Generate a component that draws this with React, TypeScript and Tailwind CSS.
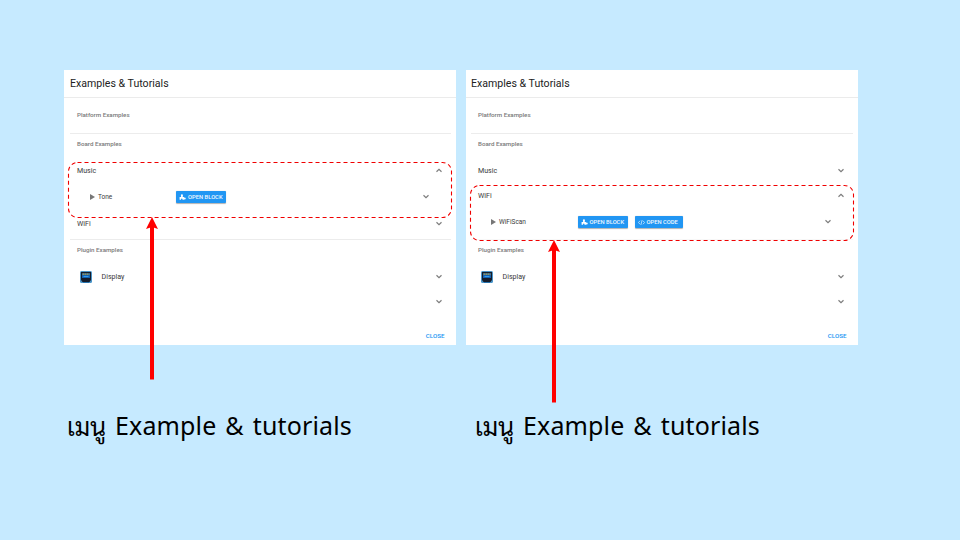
import React from "react";

type Kind = "music" | "wifi";

function Chevron({ up = false }: { up?: boolean }) {
  return (
    <svg className="h-2 w-2 shrink-0" viewBox="0 0 8 8" fill="none" stroke="#7c7c7c" strokeWidth="1.2">
      {up ? <path d="M1.500 4.700 4 2.400 6.500 4.700" /> : <path d="M1.500 2.300 4 4.600 6.500 2.300" />}
    </svg>
  );
}

function PuzzleIcon() {
  return (
    <svg className="h-[7px] w-[7px] shrink-0" viewBox="0 0 24 24" fill="#fff">
      <path d="M2 10h5V6.500a3.500 3.500 0 1 1 6 0V10h4v3a3.500 3.500 0 1 1 0 5v2h-5v-2a2.500 2.500 0 0 0-5 0v2H2z" />
    </svg>
  );
}

function CodeIcon() {
  return (
    <svg className="h-[7px] w-[7px] shrink-0" viewBox="0 0 24 24" fill="none" stroke="#fff" strokeWidth="2.2">
      <path d="M7 6 1.500 12 7 18M17 6l5.500 6L17 18M14 4l-4 16" />
    </svg>
  );
}

function DisplayModule() {
  return (
    <svg className="h-3 w-3 shrink-0" viewBox="0 0 12 12">
      <rect width="12" height="12" rx="1.500" fill="#4a94c8" />
      <path d="M1 1h10v8l-1.500 2h-7L1 9z" fill="#151c2b" />
      <rect x="2" y="2.200" width="8" height="4.800" fill="#1560ae" />
      <path d="M2.500 3.200h7" stroke="#b5a34c" strokeWidth="1.200" strokeDasharray="1.600 .4" />
      <path d="M3.500 5.500h5" stroke="#2f9cf0" strokeWidth="1" />
      <path d="M3 11.500h6" stroke="#2672ad" strokeWidth="1" />
    </svg>
  );
}

function SectionTitle({ children, className }: { children: React.ReactNode; className: string }) {
  return (
    <div className={`flex pl-[13px] text-[6.2px] font-medium text-[#7a7a7a] ${className}`}>{children}</div>
  );
}

function ActionButton({ icon, label, width }: { icon: React.ReactNode; label: string; width: string }) {
  return (
    <span
      className={`flex h-[12.5px] items-center gap-[2px] rounded-[1px] bg-[#2196f3] pt-px pl-[3px] text-[5.8px] font-medium whitespace-nowrap text-[#f0f8ff] shadow-[0_0.5px_1px_rgba(0,0,0,0.3)] ${width}`}
    >
      {icon}
      {label}
    </span>
  );
}

function Group({ name, open = false }: { name: string; open?: boolean }) {
  return (
    <div className="flex h-[25px] items-center justify-between pr-[13px] pl-[13px] text-[7.1px]">
      <span className="pt-px">{name}</span>
      <Chevron up={open} />
    </div>
  );
}

function Example({ name, code = false }: { name: string; code?: boolean }) {
  return (
    <div className="flex h-7 items-center pr-[26px] pl-[26px] text-[6.5px]">
      <div className="flex w-[86px] items-center gap-[3px]">
        <svg className="h-1.5 w-[5px]" viewBox="0 0 5 6">
          <path d="M0 0 5 3 0 6z" fill="#777" />
        </svg>
        <span>{name}</span>
      </div>
      <div className={`flex flex-1 gap-[7px] ${code ? "pl-[0.5px]" : ""}`}>
        <ActionButton icon={<PuzzleIcon />} label="OPEN BLOCK" width="w-[50px]" />
        {code && <ActionButton icon={<CodeIcon />} label="OPEN CODE" width="w-[48px]" />}
      </div>
      <Chevron />
    </div>
  );
}

function Dialog({ kind }: { kind: Kind }) {
  const music = kind === "music";
  return (
    <div className="relative h-[275px] w-[392px] bg-white font-['Roboto',sans-serif] leading-none text-[#3a3a3a]">
      <div
        className={`flex h-7 items-center border-b border-[#ebebeb] pt-px text-[10.6px] text-[#222] ${music ? "pl-1.5" : "pl-[5px]"}`}
      >
        Examples &amp; Tutorials
      </div>
      <div className={music ? "" : "-ml-px"}>
        <SectionTitle className="h-[35px] items-center pb-px">Platform Examples</SectionTitle>
        <div className="mr-[5px] ml-1.5 h-px bg-[#ececec]" />
        <SectionTitle className="h-6 items-start pt-[7px]">Board Examples</SectionTitle>
        <Group name="Music" open={music} />
        {music && <Example name="Tone" />}
        <Group name="WiFi" open={!music} />
        {!music && <Example name="WiFiScan" code />}
        <div className={`mt-[3px] mr-[5px] ml-1.5 h-px ${music ? "bg-[#ececec]" : "bg-[#f7f7f7]"}`} />
        <SectionTitle className="h-[25px] items-start pt-[7px]">Plugin Examples</SectionTitle>
        <div className="flex h-6 items-center pr-[13px] pl-4 text-[7.1px]">
          <DisplayModule />
          <span className="ml-[9.5px] flex-1">Display</span>
          <Chevron />
        </div>
        <div className="flex h-[25px] items-center justify-end pr-[13px]">
          <Chevron />
        </div>
        <div className="mt-[13px] flex h-[18px] items-center justify-end pr-[11.5px] text-[6.2px] font-medium text-[#2196f3]">
          CLOSE
        </div>
      </div>
      <svg
        className={`absolute left-0 overflow-visible ${music ? "top-0" : "top-[23px]"}`}
        width="392"
        height="310"
        viewBox="0 0 392 310"
      >
        <rect x="4.500" y="92.500" width="383" height="55" rx="9" fill="none" stroke="#f00000" strokeWidth="1.1" strokeDasharray="4 3" />
        <path d="M88 309.500V155" stroke="#ff0000" strokeWidth="4" />
        <path d="M88 147 94 159 88 157 82 159z" fill="#ff0000" />
      </svg>
    </div>
  );
}

export default function App() {
  return (
    <main className="flex h-[540px] w-[960px] gap-2.5 overflow-hidden bg-[#c6eaff] pt-[70px] pl-16">
      {(["music", "wifi"] as Kind[]).map((kind) => (
        <section key={kind} className="w-[392px]">
          <Dialog kind={kind} />
          <p
            className={`mt-[61px] flex h-10 items-center text-[25px] whitespace-nowrap text-black ${kind === "music" ? "pl-[3px]" : "pl-[9px]"}`}
          >
            <span className="w-[48px] font-['Sarabun','TH_Sarabun_New','Noto_Sans_Thai_Looped','Loma','Garuda','Waree',sans-serif]">เมนู</span>
            <span className="font-['Noto_Sans',sans-serif] tracking-[0.14px] [word-spacing:2.3px]">Example &amp; tutorials</span>
          </p>
        </section>
      ))}
    </main>
  );
}
